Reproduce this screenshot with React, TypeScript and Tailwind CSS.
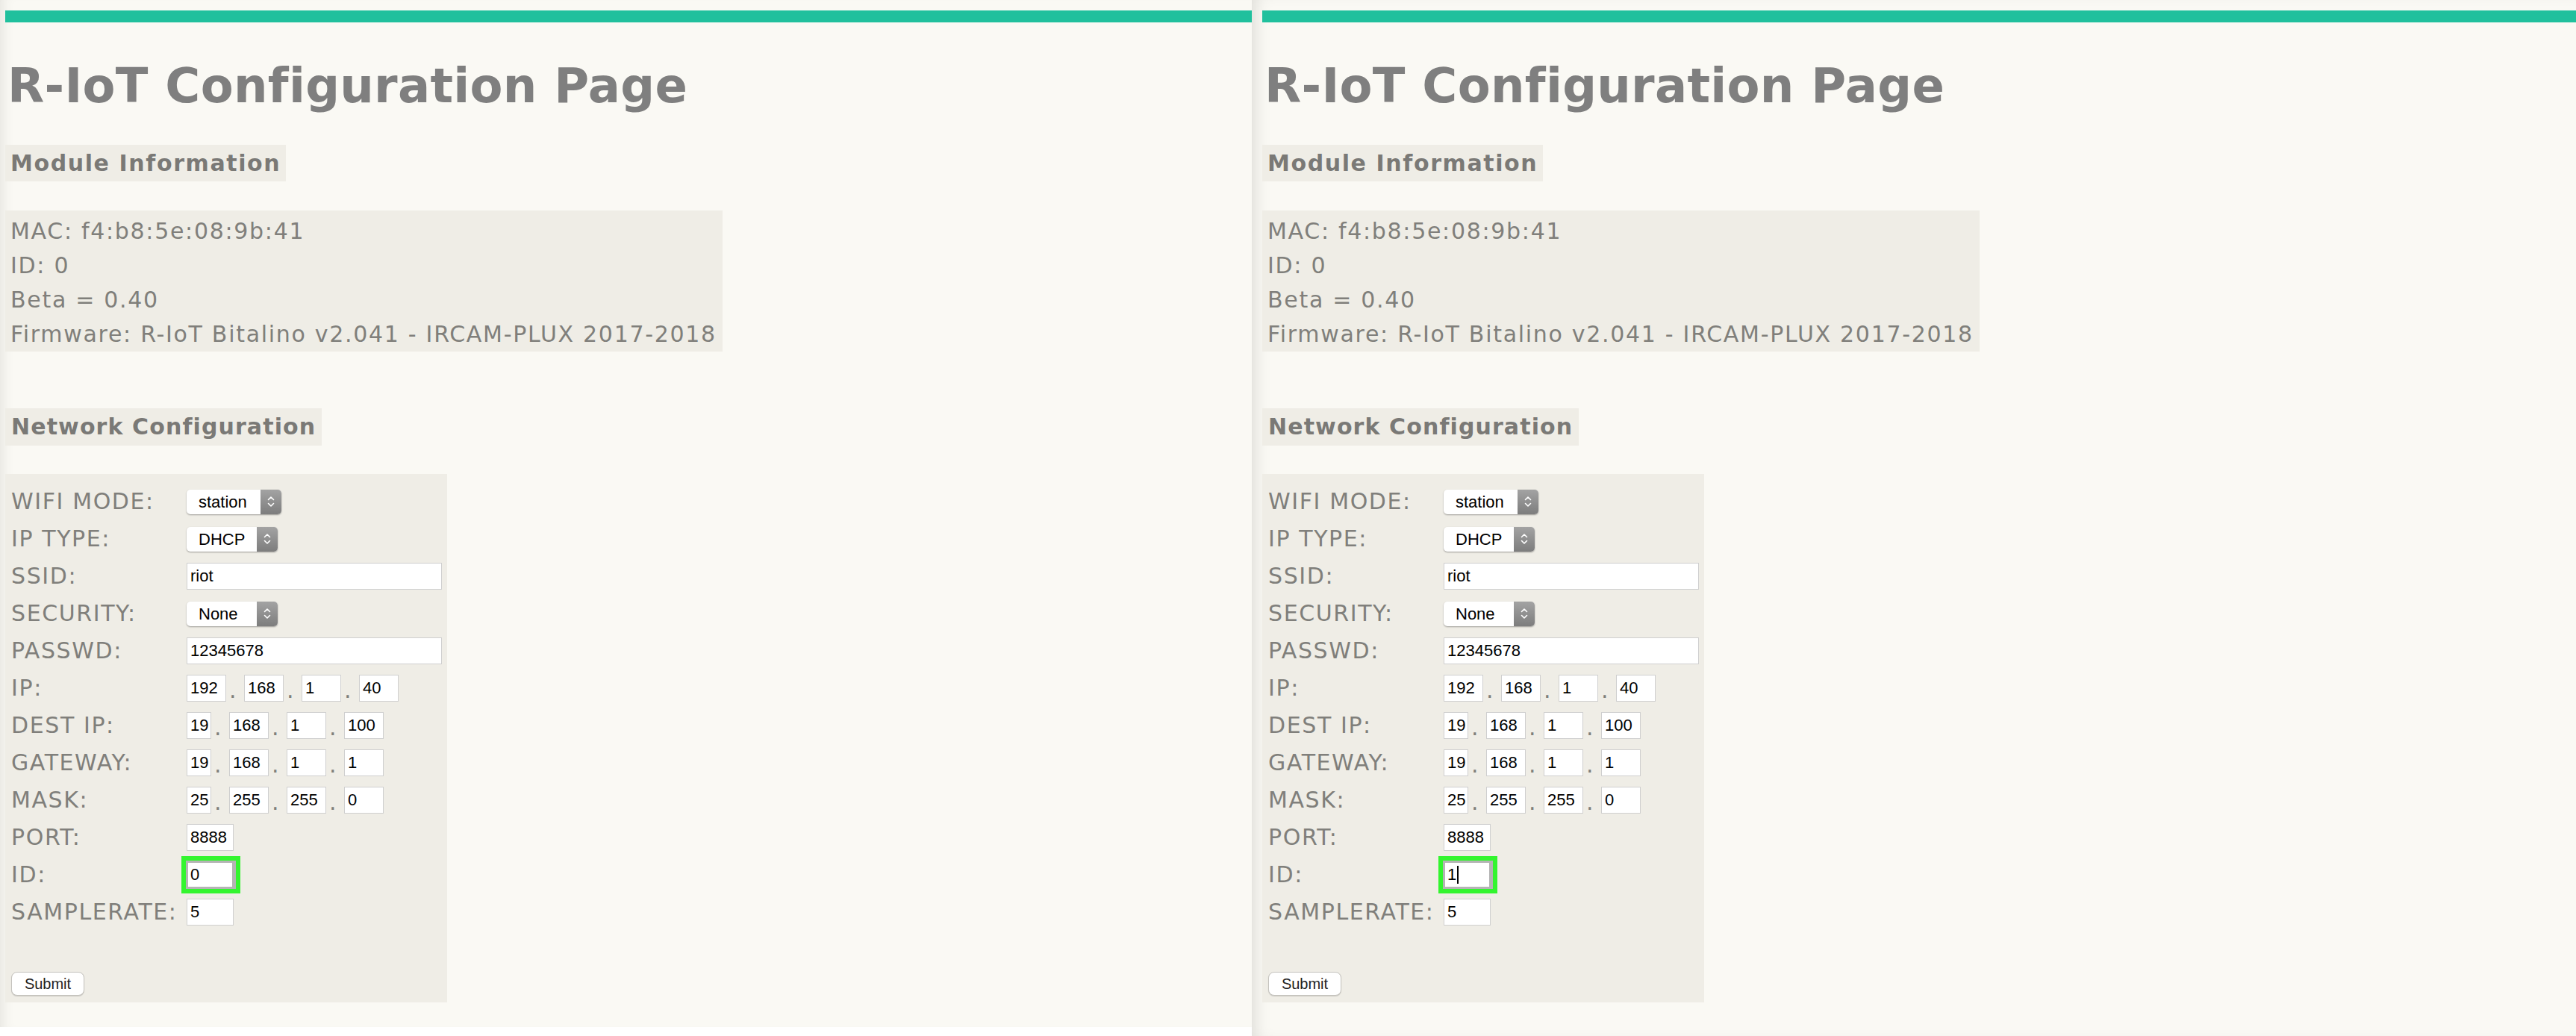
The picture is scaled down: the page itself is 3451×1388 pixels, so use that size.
import React from "react";

/* ─── one browser page, two of them side by side ─── */

const LABEL = "text-[30px] text-[#807f7b] leading-[36px] tracking-[1.6px]";

function Select({ value, w }: { value: string; w: string }) {
  return (
    <div className={`flex h-[33px] ${w} rounded-[5px] bg-white shadow-[0_1px_2px_rgba(0,0,0,0.35)] overflow-hidden`}>
      <span className="flex-1 pl-[16px] text-[22px] leading-[33px] text-black font-['Liberation_Sans',sans-serif]">{value}</span>
      <span className="flex w-[28px] items-center justify-center bg-gradient-to-b from-[#a3a3a3] to-[#7d7d7d]">
        <svg viewBox="0 0 12 20" className="w-[12px] h-[20px]" fill="none" stroke="#fff" strokeWidth={1.6} strokeLinecap="round" strokeLinejoin="round">
          <path d="M2.5 7.5 6 4l3.5 3.5" />
          <path d="M2.5 12.5 6 16l3.5-3.5" />
        </svg>
      </span>
    </div>
  );
}

function Field({ value, w }: { value: string; w: string }) {
  return (
    <div className={`h-[36px] ${w} border border-[#cfcfcf] bg-white pl-[4px] overflow-hidden whitespace-nowrap text-[22px] leading-[34px] text-black font-['Liberation_Sans',sans-serif]`}>
      {value}
    </div>
  );
}

function Quad({ parts, first }: { parts: string[]; first: string }) {
  return (
    <div className="flex items-end">
      {parts.map((p, i) => (
        <React.Fragment key={i}>
          {i > 0 && <span className="w-[24px] pl-[4px] text-[30px] leading-[30px] text-[#807f7b]">.</span>}
          <Field value={p} w={i === 0 ? first : "w-[53px]"} />
        </React.Fragment>
      ))}
    </div>
  );
}

function Row({ label, children }: { label: string; children: React.ReactNode }) {
  return (
    <div className="flex h-[50px] items-center">
      <span className={`w-[235px] ${LABEL}`}>{label}</span>
      {children}
    </div>
  );
}

function Page({ id, caret, left }: { id: string; caret?: boolean; left: boolean }) {
  return (
    <div
      className={
        left
          ? "w-[1677px] h-[1376px] pl-[7px] bg-[#faf9f4] shadow-[inset_16px_0_18px_-14px_rgba(0,0,0,0.10)]"
          : "flex-1 h-[1388px] pl-[14px] bg-[#faf9f4] shadow-[inset_16px_0_22px_-12px_rgba(0,0,0,0.12)]"
      }
    >
      <div className="flex flex-col items-start font-['DejaVu_Sans',Verdana,sans-serif]">
        <div className="mt-[14px] h-[16px] w-full bg-[#20c09d]" />

        <h1 className="mt-[47px] ml-[3px] text-[64px] leading-[76px] font-bold text-[#7f7f7f] tracking-[0.3px]">
          R-IoT Configuration Page
        </h1>

        <div className="mt-[41px] h-[49px] px-[7px] bg-[#efede6] text-[30px] leading-[49px] font-bold text-[#7a7976] tracking-[1.6px]">
          Module Information
        </div>

        <div className="mt-[39px] pt-[5px] pl-[7px] pr-[8px] bg-[#efede6] text-[30px] leading-[46px] text-[#807f7b] tracking-[1.7px]">
          <p>MAC: f4:b8:5e:08:9b:41</p>
          <p>ID: 0</p>
          <p>Beta = 0.40</p>
          <p>Firmware: R-IoT Bitalino v2.041 - IRCAM-PLUX 2017-2018</p>
        </div>

        <div className="mt-[76px] h-[50px] px-[8px] bg-[#efede6] text-[30px] leading-[50px] font-bold text-[#7a7976] tracking-[1.1px]">
          Network Configuration
        </div>

        <div className="mt-[38px] w-[592px] pt-[12px] pb-[9px] pl-[8px] pr-[7px] bg-[#efede6]">
          <Row label="WIFI MODE:"><Select value="station" w="w-[127px]" /></Row>
          <Row label="IP TYPE:"><Select value="DHCP" w="w-[122px]" /></Row>
          <Row label="SSID:"><Field value="riot" w="w-[342px]" /></Row>
          <Row label="SECURITY:"><Select value="None" w="w-[122px]" /></Row>
          <Row label="PASSWD:"><Field value="12345678" w="w-[342px]" /></Row>
          <Row label="IP:"><Quad parts={["192", "168", "1", "40"]} first="w-[53px]" /></Row>
          <Row label="DEST IP:"><Quad parts={["19", "168", "1", "100"]} first="w-[33px]" /></Row>
          <Row label="GATEWAY:"><Quad parts={["19", "168", "1", "1"]} first="w-[33px]" /></Row>
          <Row label="MASK:"><Quad parts={["25", "255", "255", "0"]} first="w-[33px]" /></Row>
          <Row label="PORT:"><Field value="8888" w="w-[63px]" /></Row>
          <Row label="ID:">
            <div className="-ml-[7px] border-[6px] border-[#33f52f]">
              <div className="h-[38px] w-[67px] border-[3px] border-[#b4b4b4] border-r-[5px] bg-white pl-[3px] text-[22px] leading-[32px] text-black font-['Liberation_Sans',sans-serif] flex items-center">
                {id}
                {caret && <span className="ml-[1px] h-[24px] w-[2px] bg-black" />}
              </div>
            </div>
          </Row>
          <Row label="SAMPLERATE:"><Field value="5" w="w-[63px]" /></Row>

          <button className="mt-[55px] h-[32px] w-[98px] rounded-[8px] border border-[#c4c2bd] bg-white text-[20px] text-[#222] font-['Liberation_Sans',sans-serif] shadow-[0_1px_1px_rgba(0,0,0,0.15)]">
            Submit
          </button>
        </div>
      </div>
    </div>
  );
}

export default function App() {
  return (
    <div className="flex w-[3451px] h-[1388px] bg-white overflow-hidden">
      <Page id="0" left />
      <Page id="1" caret left={false} />
    </div>
  );
}
